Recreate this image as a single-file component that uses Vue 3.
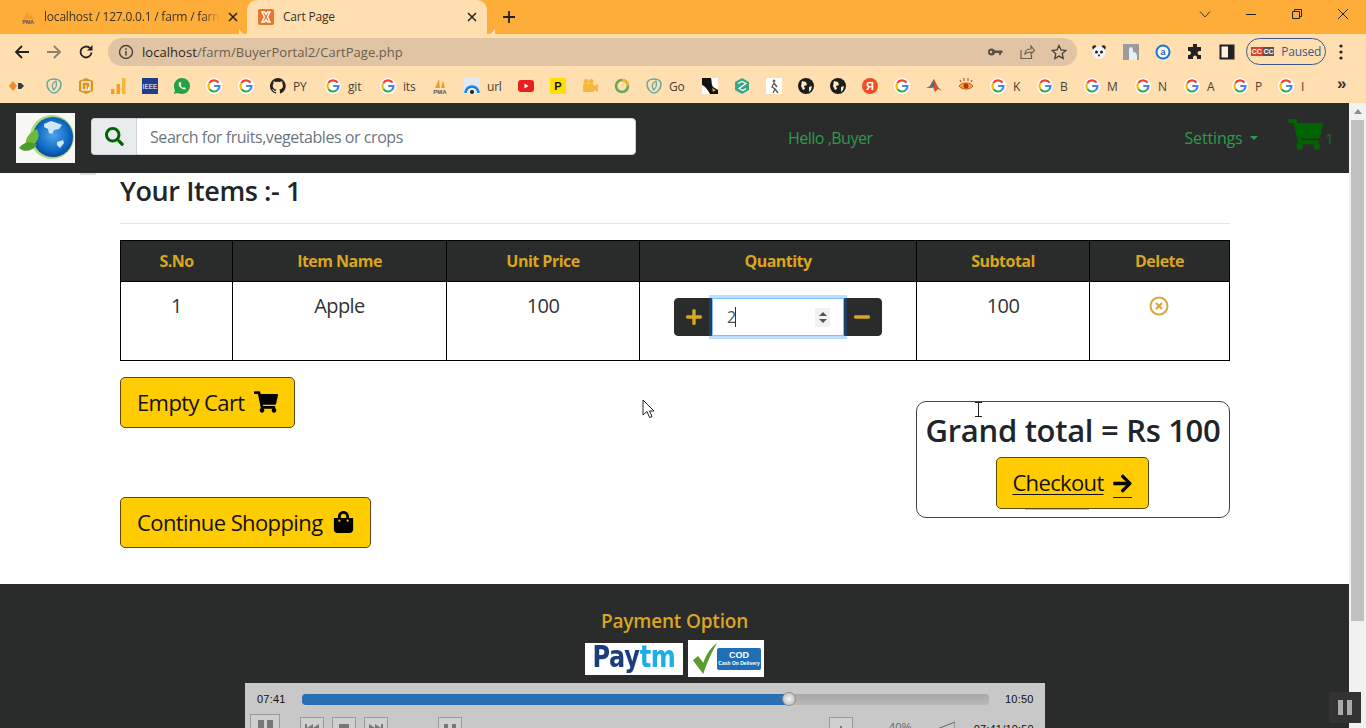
<script setup>
const raw = [
  [17, 'dia'], [54, 'teal'], [86, 'bld'], [118, 'bars'], [150, 'ieee'], [182, 'wa'], [214, 'g'], [246, 'g'],
  [278, 'gh', 'PY'], [333, 'g', 'git'], [388, 'g', 'its'], [440, 'pma'], [472, 'arc', 'url'], [526, 'yt'],
  [558, 'p'], [590, 'cam'], [622, 'ring'], [654, 'teal', 'Go'], [710, 'peng'], [742, 'hex'], [774, 'fig'],
  [806, 'globe'], [838, 'globe'], [870, 'ya'], [902, 'g'], [934, 'mat'], [966, 'eye'], [998, 'g', 'K'],
  [1045, 'g', 'B'], [1092, 'g', 'M'], [1143, 'g', 'N'], [1192, 'g', 'A'], [1240, 'g', 'P'], [1286, 'g', 'I']
]
const bookmarks = raw.map((b, i) => ({
  kind: b[1],
  label: b[2] || '',
  width: (i < raw.length - 1 ? raw[i + 1][0] - b[0] - 16 : 40)
}))
const columns = ['S.No', 'Item Name', 'Unit Price', 'Quantity', 'Subtotal', 'Delete']
const colWidths = [112, 214, 193, 277, 173, 140]
const cart = 'M528.12 301.319l47.273-208C578.806 78.301 567.391 64 551.99 64H159.208l-9.166-44.81C147.758 8.021 137.93 0 126.529 0H24C10.745 0 0 10.745 0 24v16c0 13.255 10.745 24 24 24h69.883l70.248 343.435C147.325 417.1 136 435.222 136 456c0 30.928 25.072 56 56 56s56-25.072 56-56c0-15.674-6.447-29.835-16.824-40h209.647C430.447 426.165 424 440.326 424 456c0 30.928 25.072 56 56 56s56-25.072 56-56c0-22.172-12.888-41.332-31.579-50.405l5.517-24.276c3.413-15.018-8.002-29.319-23.403-29.319H218.117l-6.545-32h293.145c11.206 0 20.92-7.754 23.403-18.681z'
</script>

<template>
  <div class="screen">
    <header class="tabstrip">
      <div class="tab">
        <svg class="fav" viewBox="0 0 16 16"><path d="M3 10 8 2l1 8zM9 10l2-6 2 6z" fill="#f09a2c"/><text x="8" y="15" font-size="5.5" font-weight="700" text-anchor="middle" fill="#555" font-family="Liberation Sans, sans-serif">PMA</text></svg>
        <span class="tab-title">localhost / 127.0.0.1 / farm / farm</span>
        <svg class="tab-x" viewBox="0 0 10 10"><path d="M1 1l8 8M9 1l-8 8" stroke="#222" stroke-width="1.5"/></svg>
      </div>
      <div class="tab active">
        <svg class="fav" viewBox="0 0 16 16"><rect width="16" height="16" rx="2" fill="#e8762c"/><path d="M4 3h2.500L8 5.500 9.500 3H12L9.500 8 12 13H9.500L8 10.500 6.500 13H4l2.500-5z" fill="none" stroke="#fff" stroke-width="1.400"/></svg>
        <span class="tab-title">Cart Page</span>
        <svg class="tab-x" viewBox="0 0 10 10"><path d="M1 1l8 8M9 1l-8 8" stroke="#222" stroke-width="1.5"/></svg>
      </div>
      <svg class="newtab" viewBox="0 0 12 12"><path d="M6 0v12M0 6h12" stroke="#222" stroke-width="1.800"/></svg>
      <div class="winctl">
        <svg viewBox="0 0 12 12"><path d="M1 3.500 6 9l5-5.500" fill="none" stroke="#333"/></svg>
        <svg viewBox="0 0 12 12"><path d="M1 6.500h10" stroke="#222"/></svg>
        <svg viewBox="0 0 12 12"><path d="M1.500 3.500h7v7h-7zM3.500 3.500v-2h7v7h-2" fill="none" stroke="#222"/></svg>
        <svg viewBox="0 0 12 12"><path d="M1 1l10 10M11 1 1 11" stroke="#222"/></svg>
      </div>
    </header>

    <div class="toolbar">
      <svg class="ti" viewBox="0 0 16 16"><path d="M15 8H2M8 2 2 8l6 6" fill="none" stroke="#222" stroke-width="1.800"/></svg>
      <svg class="ti" viewBox="0 0 16 16"><path d="M1 8h13M8 2l6 6-6 6" fill="none" stroke="#8d7f6c" stroke-width="1.800"/></svg>
      <svg class="ti" viewBox="0 0 16 16"><path d="M13.500 8.500A5.500 5.500 0 1 1 12 4.200" fill="none" stroke="#222" stroke-width="1.800"/><path d="M14.500 1v5.500H9z" fill="#222"/></svg>
      <div class="omnibox">
        <svg class="ti" viewBox="0 0 16 16"><circle cx="8" cy="8" r="6.500" fill="none" stroke="#4a4238" stroke-width="1.400"/><path d="M8 7v4.500M8 4.200v1.500" stroke="#4a4238" stroke-width="1.500"/></svg>
        <span class="url"><b>localhost</b>/farm/BuyerPortal2/CartPage.php</span>
        <div class="omni-actions">
          <svg class="ti" viewBox="0 0 16 16"><circle cx="4.500" cy="8" r="3.500" fill="#5a5045"/><circle cx="4" cy="8" r="1.200" fill="#e0c4a3"/><path d="M7 6.500h8.500v2.500H14v2h-2V9H7z" fill="#5a5045"/></svg>
          <svg class="ti" viewBox="0 0 16 16"><path d="M2 6v8.500h10.500V11M6 10c0-3.500 3-5 6-5V2l3.500 4.500L12 10V8c-3 0-4.500.5-6 2z" fill="none" stroke="#6b6050" stroke-width="1.200"/></svg>
          <svg class="ti" viewBox="0 0 16 16"><path d="m8 1.500 2 4.500 4.800.5-3.600 3.200 1 4.800L8 12.100l-4.200 2.400 1-4.800L1.200 6.500 6 6z" fill="none" stroke="#4a4238" stroke-width="1.300"/></svg>
        </div>
      </div>
      <div class="exts">
        <svg class="ti" viewBox="0 0 16 16"><circle cx="3.500" cy="3.500" r="2.200" fill="#222"/><circle cx="12.500" cy="3.500" r="2.200" fill="#222"/><circle cx="8" cy="8.500" r="6.500" fill="#f4f4f4"/><circle cx="5.500" cy="8" r="1.500" fill="#222"/><circle cx="10.500" cy="8" r="1.500" fill="#222"/><circle cx="8" cy="11.500" r="1" fill="#222"/></svg>
        <svg class="ti" viewBox="0 0 16 16"><rect width="16" height="16" fill="#9b9b9b"/><path d="M6 16V6c0-4 4-4 4 0v2c3 0 4 2 4 4v4z" fill="#e6edf5"/></svg>
        <svg class="ti" viewBox="0 0 16 16"><circle cx="8" cy="8" r="7.500" fill="#1a73d9"/><circle cx="8" cy="8" r="5.500" fill="#fff"/><text x="8" y="11" font-size="9" font-weight="700" text-anchor="middle" fill="#1a5fb4" font-family="Liberation Sans, sans-serif">a</text></svg>
        <svg class="ti" viewBox="0 0 16 16"><path d="M6 1a2 2 0 0 1 4 0v2h4v4h-1.500a2 2 0 0 0 0 4H14v4H10v-1.500a2 2 0 0 0-4 0V15H1v-4h1a2 2 0 0 0 0-4H1V3h5z" fill="#222"/></svg>
        <svg class="ti" viewBox="0 0 16 16"><rect x="1.500" y="1.500" width="13" height="13" fill="#fff3e0" stroke="#222" stroke-width="2"/><rect x="9" y="1" width="6" height="14" fill="#222"/></svg>
      </div>
      <div class="paused">
        <span class="cc"><i>CC</i><i>CC</i></span>
        <span>Paused</span>
      </div>
      <svg class="dots" viewBox="0 0 4 16"><circle cx="2" cy="2" r="1.600"/><circle cx="2" cy="8" r="1.600"/><circle cx="2" cy="14" r="1.600"/></svg>
    </div>

    <div class="bookmarks">
      <div v-for="(b, i) in bookmarks" :key="i" class="bm" :style="{ width: b.width + 'px' }">
        <svg class="bi" viewBox="0 0 16 16">
          <template v-if="b.kind === 'g'">
            <circle cx="8" cy="8" r="8" fill="#fff"/>
            <path d="M12.500 4.600A5.500 5.500 0 0 0 3.400 5" fill="none" stroke="#ea4335" stroke-width="2.200"/>
            <path d="M3.400 5a5.500 5.500 0 0 0 0 6" fill="none" stroke="#fbbc05" stroke-width="2.200"/>
            <path d="M3.400 11a5.500 5.500 0 0 0 8.400 1" fill="none" stroke="#34a853" stroke-width="2.200"/>
            <path d="M11.800 12c1-1 1.700-2.300 1.700-4H8.200" fill="none" stroke="#4285f4" stroke-width="2.200"/>
          </template>
          <template v-else-if="b.kind === 'dia'">
            <path d="M4 3 8 8l-4 5-4-5z" fill="#f08a30"/><path d="M9 5h3l3 3-3 3H9z" fill="#2f3f4a"/>
          </template>
          <template v-else-if="b.kind === 'teal'">
            <path d="M8 1c4 0 7 2 7 5 0 5-4 9-7 9s-7-4-7-9c0-3 3-5 7-5z" fill="none" stroke="#5fa8a8" stroke-width="1.500"/>
            <path d="M10 3C6 5 5 9 8 12c2-2 3-5 2-9z" fill="none" stroke="#5fa8a8" stroke-width="1.200"/>
          </template>
          <template v-else-if="b.kind === 'bld'">
            <path d="M8 0l7 3v10l-7 3-7-3V3z" fill="#d9951f"/><rect x="4" y="4" width="8" height="8" fill="none" stroke="#fff" stroke-width="1.200"/><path d="M8 7v5M10.500 9v3" stroke="#fff"/>
          </template>
          <template v-else-if="b.kind === 'bars'">
            <rect x="1" y="11" width="3.500" height="5" fill="#f59d2a"/><rect x="6.500" y="6" width="3.500" height="10" fill="#f59d2a"/><rect x="12" y="0" width="3.500" height="16" fill="#f7b733"/>
          </template>
          <template v-else-if="b.kind === 'ieee'">
            <rect width="16" height="16" fill="#1d3f8f"/><text x="8" y="11" font-size="6.500" text-anchor="middle" fill="#fff" font-family="Liberation Sans, sans-serif">IEEE</text>
          </template>
          <template v-else-if="b.kind === 'wa'">
            <path d="M8 0a8 8 0 0 1 0 16 8 8 0 0 1-4-1l-4 1 1-4A8 8 0 0 1 8 0z" fill="#25a244"/><path d="M5 4.500c-1 2 0 4 2 5.500s4 2 5 .5L10 9l-1 1C8 9.500 7 8.500 6.500 7l1-1L6.500 4z" fill="#fff"/>
          </template>
          <template v-else-if="b.kind === 'gh'">
            <path d="M8 0a8 8 0 0 0-2.500 15.600c.4.100.5-.2.500-.4v-1.400c-2.200.5-2.700-1-2.700-1-.4-.9-.9-1.200-.9-1.200-.7-.5.100-.5.100-.5.800.1 1.200.8 1.200.8.700 1.200 1.900.9 2.300.7.100-.5.300-.9.500-1.100-1.800-.2-3.700-.9-3.700-4 0-.9.300-1.600.8-2.100-.1-.2-.4-1 .1-2.100 0 0 .7-.2 2.200.8a7.600 7.600 0 0 1 4 0c1.500-1 2.200-.8 2.200-.8.400 1.100.2 1.900.1 2.100.5.600.8 1.300.8 2.100 0 3.100-1.900 3.700-3.700 3.900.3.300.6.800.6 1.500v2.200c0 .2.100.5.600.4A8 8 0 0 0 8 0z" fill="#222"/>
          </template>
          <template v-else-if="b.kind === 'pma'">
            <path d="M3 10 7 1l1 9zM9 10l2-7 2 7z" fill="#f09a2c"/><text x="8" y="15.500" font-size="6" font-weight="700" text-anchor="middle" fill="#555" font-family="Liberation Sans, sans-serif">PMA</text>
          </template>
          <template v-else-if="b.kind === 'arc'">
            <rect y="0" width="16" height="16" fill="#dfe9f2"/><path d="M1.500 15a6.500 6.500 0 0 1 13 0" fill="none" stroke="#1e7fd6" stroke-width="2.500"/><circle cx="8" cy="14" r="2" fill="#123"/>
          </template>
          <template v-else-if="b.kind === 'yt'">
            <rect y="2" width="16" height="12" rx="3" fill="#e8201c"/><path d="M6.500 5.500v5l4-2.500z" fill="#fff"/>
          </template>
          <template v-else-if="b.kind === 'p'">
            <rect width="16" height="16" fill="#ffdf00"/><text x="8" y="12" font-size="11" font-weight="700" text-anchor="middle" fill="#111" font-family="Liberation Sans, sans-serif">P</text>
          </template>
          <template v-else-if="b.kind === 'cam'">
            <rect x="1" y="6" width="11" height="8" rx="1" fill="#f5b83d"/><circle cx="4" cy="3.500" r="2.500" fill="#f5b83d"/><circle cx="9" cy="3.500" r="2.500" fill="#f5b83d"/><path d="M12 8l4-2v8l-4-2z" fill="#f5b83d"/>
          </template>
          <template v-else-if="b.kind === 'ring'">
            <circle cx="8" cy="8" r="6" fill="none" stroke="#6aa84f" stroke-width="2.600"/><path d="M8 2a6 6 0 0 1 6 6" fill="none" stroke="#f0b429" stroke-width="2.600"/>
          </template>
          <template v-else-if="b.kind === 'peng'">
            <rect width="16" height="16" fill="#fff"/><path d="M0 0h9c1 3 0 6 2 9l5 3v4H8C6 12 3 8 0 7z" fill="#111"/><path d="M10 10l4 2-3 2z" fill="#f29a1f"/>
          </template>
          <template v-else-if="b.kind === 'hex'">
            <path d="M8 0l7 4v8l-7 4-7-4V4z" fill="#3aa686"/><path d="M4 5.500l4-2 4 2-7 5 4 2 3-2" fill="none" stroke="#fff" stroke-width="1.200"/>
          </template>
          <template v-else-if="b.kind === 'fig'">
            <rect width="16" height="16" fill="#fff"/><circle cx="8" cy="3" r="1.500" fill="#666"/><path d="M8 5 6 9l3 2-2 4M8 5l3 4M9 11l3 4" fill="none" stroke="#555" stroke-width="1.300"/>
          </template>
          <template v-else-if="b.kind === 'globe'">
            <circle cx="8" cy="8" r="8" fill="#1d1d1d"/><path d="M4 3l4 1 1 3-3 1 1 3-2 1-2-4zM11 9l3-1-1 4-2 2z" fill="#ffe9c8"/>
          </template>
          <template v-else-if="b.kind === 'ya'">
            <circle cx="8" cy="8" r="8" fill="#f04e23"/><text x="8" y="12" font-size="11" font-weight="700" text-anchor="middle" fill="#fff" font-family="Liberation Sans, sans-serif">Я</text>
          </template>
          <template v-else-if="b.kind === 'mat'">
            <path d="M0 10l4-2 4-7 4 8 4 4-4-2-3 3-2-5-3 1z" fill="#c9542a"/><path d="M4 8l4-7v8l-3 1z" fill="#3a6ea5"/>
          </template>
          <template v-else-if="b.kind === 'eye'">
            <path d="M1 8c3-4 11-4 14 0-3 4-11 4-14 0z" fill="#f2a93b" stroke="#c9541e"/><circle cx="8" cy="8" r="2.500" fill="#b03a10"/><path d="M3 4 2 2M6 3V0M10 3V0M13 4l1-2" stroke="#c9541e" stroke-width="1.200"/>
          </template>
        </svg>
        <span v-if="b.label" class="bl">{{ b.label }}</span>
      </div>
      <span class="more">»</span>
    </div>

    <div class="viewport">
      <div class="page">
        <nav class="navbar">
          <svg class="logo" viewBox="0 0 59 50">
            <defs>
              <radialGradient id="gl" cx="0.5" cy="0.45" r="0.6"><stop offset="0" stop-color="#4ba6ea"/><stop offset="0.65" stop-color="#1069c4"/><stop offset="1" stop-color="#0a3f8c"/></radialGradient>
            </defs>
            <rect width="59" height="50" fill="#f7f8f6"/>
            <circle cx="36" cy="24" r="22" fill="#a8d97a"/>
            <circle cx="37" cy="24" r="20" fill="url(#gl)"/>
            <path d="M28 11l7-3 6 2 5 2-3 4-5 1-2 4-3-1-1-4-4-2zM41 29l6-2 1 3-4 5-3-3z" fill="#cfe8f7"/>
            <path d="M11 36c-4-8 1-16 10-20 4 8 0 16-10 20z" fill="#6fb93a"/>
            <path d="M3 35c5-6 11-7 18-3-5 6-12 8-18 3z" fill="#4c9a2a"/>
          </svg>
          <div class="search">
            <span class="addon">
              <svg viewBox="0 0 512 512"><path fill="#006400" d="M505 442.700L405.300 343c-4.500-4.500-10.600-7-17-7H372c27.600-35.300 44-79.700 44-128C416 93.100 322.900 0 208 0S0 93.100 0 208s93.100 208 208 208c48.300 0 92.700-16.400 128-44v16.300c0 6.400 2.500 12.500 7 17l99.700 99.700c9.400 9.400 24.600 9.400 33.900 0l28.300-28.300c9.400-9.400 9.400-24.600.1-34zM208 336c-70.700 0-128-57.200-128-128 0-70.700 57.200-128 128-128 70.700 0 128 57.200 128 128 0 70.700-57.200 128-128 128z"/></svg>
            </span>
            <input class="search-input" type="text" placeholder="Search for fruits,vegetables or crops" />
          </div>
          <span class="hello">Hello ,Buyer</span>
          <span class="settings">Settings<i class="caret"></i></span>
          <svg class="nav-cart" viewBox="0 0 576 512"><path fill="#006400" :d="cart"/></svg>
          <span class="count">1</span>
        </nav>

        <main class="content">
          <i class="speck"></i>
          <h3 class="title">Your Items :- 1</h3>
          <hr class="rule" />
          <table class="cart-table">
            <colgroup><col v-for="w in colWidths" :key="w" :style="{ width: w + 'px' }" /></colgroup>
            <thead><tr><th v-for="c in columns" :key="c">{{ c }}</th></tr></thead>
            <tbody>
              <tr>
                <td>1</td>
                <td>Apple</td>
                <td>100</td>
                <td class="qty-cell">
                  <div class="qty">
                    <button class="qbtn left"><svg viewBox="0 0 448 512"><path fill="#daa520" d="M416 208H272V64c0-17.670-14.330-32-32-32h-32c-17.670 0-32 14.330-32 32v144H32c-17.670 0-32 14.330-32 32v32c0 17.670 14.330 32 32 32h144v144c0 17.670 14.330 32 32 32h32c17.670 0 32-14.330 32-32V304h144c17.670 0 32-14.330 32-32v-32c0-17.670-14.330-32-32-32z"/></svg></button>
                    <div class="qinput">
                      <span class="qval">2</span><i class="textcaret"></i>
                      <span class="spin"><i class="up"></i><i class="down"></i></span>
                    </div>
                    <button class="qbtn right"><svg viewBox="0 0 448 512"><path fill="#daa520" d="M416 208H32c-17.670 0-32 14.330-32 32v32c0 17.670 14.330 32 32 32h384c17.670 0 32-14.330 32-32v-32c0-17.670-14.330-32-32-32z"/></svg></button>
                  </div>
                </td>
                <td>100</td>
                <td><svg class="del" viewBox="0 0 20 20"><circle cx="10" cy="10" r="8.500" fill="none" stroke="#dba53c" stroke-width="2"/><path d="M7 7l6 6M13 7l-6 6" stroke="#dba53c" stroke-width="2.200"/></svg></td>
              </tr>
            </tbody>
          </table>

          <div class="lower">
            <div class="actions">
              <button class="yellow">Empty Cart
                <svg class="y-cart" viewBox="0 0 576 512"><path fill="#000" :d="cart"/></svg>
              </button>
              <button class="yellow">Continue Shopping
                <svg class="y-bag" viewBox="0 0 448 512"><path fill="#000" d="M352 160v-32C352 57.420 294.579 0 224 0 153.420 0 96 57.420 96 128v32H0v272c0 44.183 35.817 80 80 80h288c44.183 0 80-35.817 80-80V160h-96zm-192-32c0-35.290 28.710-64 64-64s64 28.710 64 64v32H160v-32zm160 120c-13.255 0-24-10.745-24-24s10.745-24 24-24 24 10.745 24 24-10.745 24-24 24zm-192 0c-13.255 0-24-10.745-24-24s10.745-24 24-24 24 10.745 24 24-10.745 24-24 24z"/></svg>
              </button>
            </div>
            <div class="total">
              <h2 class="grand">Grand total = Rs 100</h2>
              <button class="yellow checkout"><span class="ul">Checkout</span>
                <span class="ul-icon"><svg class="y-arrow" viewBox="0 0 448 512"><path fill="#000" d="M190.500 66.900l22.200-22.200c9.400-9.400 24.600-9.400 33.900 0L441 239c9.400 9.400 9.400 24.600 0 33.900L246.600 467.300c-9.400 9.400-24.600 9.400-33.900 0l-22.200-22.200c-9.500-9.500-9.300-25 .4-34.300L311.400 296H24c-13.300 0-24-10.700-24-24v-32c0-13.300 10.700-24 24-24h287.400L190.900 101.200c-9.800-9.300-10-24.800-.4-34.300z"/></svg></span>
              </button>
            </div>
            <svg class="ibeam" viewBox="0 0 9 15"><path d="M1 .5h7M1 14.500h7M4.500 .5v14" stroke="#222" fill="none"/></svg>
            <svg class="arrow-cursor" viewBox="0 0 13 20"><path d="M1 1v15l4-3.500 2.500 6 2.500-1-2.500-5.500H12z" fill="#fff" stroke="#222"/></svg>
          </div>
        </main>

        <footer class="footer">
          <div class="pay-title">Payment Option</div>
          <div class="pay-logos">
            <div class="paytm"><span class="pt-text"><span class="pt-a">Pay</span><span class="pt-b">tm</span></span></div>
            <div class="cod">
              <svg class="check" viewBox="0 0 30 36"><path d="M1 20l6-5 6 8C17 12 22 5 29 0 23 10 17 23 13 36z" fill="#5b9a2e"/></svg>
              <div class="cod-badge"><strong>COD</strong><small>Cash On Delivery</small></div>
            </div>
          </div>
        </footer>
      </div>
      <div class="scrollbar">
        <i class="sb-up"></i>
        <div class="sb-thumb"></div>
      </div>

      <div class="player">
        <div class="seek">
          <span class="stamp">07:41</span>
          <div class="track"><div class="fill"></div><i class="knob"></i></div>
          <span class="stamp">10:50</span>
        </div>
        <div class="pctl">
          <span class="pb big"><i class="pp"></i><i class="pp"></i></span>
          <span class="pb first"><svg viewBox="0 0 16 8"><path d="M1 0h2v8H1zM9 0v8L3 4zM15 0v8L9 4z" fill="#777"/></svg></span>
          <span class="pb"><i class="st"></i></span>
          <span class="pb"><svg viewBox="0 0 16 8"><path d="M1 0v8l6-4zM7 0v8l6-4zM13 0h2v8h-2z" fill="#777"/></svg></span>
          <span class="pb far"><svg viewBox="0 0 16 8"><path d="M2 0h4v4H2zM10 0h4v4h-4z" fill="#777"/></svg></span>
          <span class="pb tail"><svg viewBox="0 0 16 8"><path d="M2 4h3v4H2zM7 2h2v6H7zM11 4h3v4h-3z" fill="#777"/></svg></span>
          <span class="vol">40%</span>
          <svg class="wedge" viewBox="0 0 28 12"><path d="M0 12 28 1v11z" fill="none" stroke="#666"/></svg>
          <span class="ptime">07:41/10:50</span>
        </div>
      </div>
      <div class="rec-pause"><i></i><i></i></div>
    </div>
  </div>
</template>

<style>
html, body { margin: 0; padding: 0; background: #fff; overflow: hidden; }
</style>

<style scoped>
.screen { width: 1366px; height: 728px; overflow: hidden; display: flex; flex-direction: column; font-family: "Open Sans", "Noto Sans", sans-serif; color: #212529; }
svg { display: block; flex: none; }

.tabstrip { height: 34px; background: #ffad39; display: flex; align-items: center; flex: none; }
.tab { width: 247px; height: 34px; box-sizing: border-box; padding: 0 9px 0 20px; display: flex; align-items: center; gap: 8px; font-size: 12px; letter-spacing: -.2px; color: #3a3226; position: relative; }
.tab.active { width: 240px; background: #ffdfb0; border-radius: 10px 10px 0 0; padding: 0 10px 0 11px; gap: 9px; }
.tab.active::before, .tab.active::after { content: ""; position: absolute; bottom: 0; width: 8px; height: 8px; background: radial-gradient(circle at 0 0, #ffad39 8px, #ffdfb0 8.500px); }
.tab.active::before { left: -8px; transform: scaleX(-1); }
.tab.active::after { right: -8px; }
.fav { width: 16px; height: 16px; }
.tab-title { flex: 1; white-space: nowrap; overflow: hidden; line-height: 18px; }
.tab:first-child .tab-title { -webkit-mask-image: linear-gradient(90deg, #000 90%, transparent); mask-image: linear-gradient(90deg, #000 90%, transparent); }
.tab-x { width: 10px; height: 10px; }
.newtab { width: 12px; height: 12px; margin-left: 16px; }
.winctl { margin-left: auto; display: flex; gap: 34px; padding-right: 17px; align-self: flex-start; padding-top: 8px; }
.winctl svg { width: 12px; height: 12px; }

.toolbar { height: 35px; background: #ffdfb0; display: flex; align-items: center; padding-left: 14px; gap: 16px; flex: none; }
.ti { width: 16px; height: 16px; }
.omnibox { width: 969px; height: 28px; box-sizing: border-box; margin-left: -2px; border-radius: 14px; background: #e0c4a3; display: flex; align-items: center; padding: 0 10px; gap: 8px; }
.url { font-size: 13px; letter-spacing: .05px; color: #6b5f50; white-space: nowrap; }
.url b { font-weight: 400; color: #2c261e; }
.omni-actions { margin-left: auto; display: flex; gap: 16px; }
.exts { display: flex; gap: 16px; margin-left: -2px; }
.paused { width: 80px; height: 27px; box-sizing: border-box; margin-left: -5px; border: 1px solid #3c5a88; border-radius: 14px; display: flex; align-items: center; justify-content: center; gap: 7px; font-size: 12px; letter-spacing: -.2px; color: #3c5a88; }
.cc { display: flex; }
.cc i { font: 700 7px/9px "Liberation Sans", sans-serif; color: #fff; background: #d8452e; padding: 0 1px; }
.cc i + i { background: #555; }
.dots { width: 4px; height: 16px; margin-left: -3px; fill: #222; }

.bookmarks { height: 34px; background: #ffdfb0; display: flex; align-items: center; padding-left: 9px; gap: 16px; flex: none; }
.bm { display: flex; align-items: center; gap: 7px; flex: none; height: 16px; }
.bi { width: 16px; height: 16px; }
.bl { font-size: 12px; letter-spacing: -.2px; color: #4a4033; white-space: nowrap; }
.more { position: absolute; left: 1337px; top: 74px; font: 700 17px/20px "Liberation Sans", sans-serif; color: #333; }

.viewport { flex: 1; min-height: 0; display: flex; position: relative; overflow: hidden; }
.page { width: 1349px; display: flex; flex-direction: column; }
.scrollbar { width: 17px; background: #f1f1f1; position: relative; }
.sb-up { display: block; margin: 6px auto 0; width: 0; height: 0; border: 4px solid transparent; border-top: 0; border-bottom: 5px solid #8c8c8c; }
.sb-thumb { position: absolute; left: 2px; right: 2px; top: 17px; height: 501px; background: #c1c1c1; }

.navbar { height: 70px; background: #2a2c2b; display: flex; align-items: flex-start; flex: none; position: relative; }
.logo { width: 59px; height: 50px; margin: 10px 0 0 16px; }
.search { display: flex; width: 545px; height: 37px; margin: 15px 0 0 16px; }
.addon { width: 45px; box-sizing: border-box; background: #e9ecef; border: 1px solid #ced4da; border-right: 0; border-radius: 4px 0 0 4px; display: flex; align-items: center; justify-content: center; }
.addon svg { width: 19px; height: 19px; }
.search-input { flex: 1; box-sizing: border-box; min-width: 0; border: 1px solid #ced4da; border-radius: 0 4px 4px 0; padding: 0 13px; font: 16px "Open Sans", sans-serif; letter-spacing: -.44px; outline: 0; background: #fff; }
.search-input::placeholder { color: #6c757d; opacity: 1; }
.hello { margin: 24px 0 0 152px; font-size: 16px; line-height: 22px; letter-spacing: -.5px; color: #2f9a4c; white-space: nowrap; }
.settings { margin: 24px 0 0 312px; font-size: 16px; line-height: 22px; letter-spacing: -.15px; color: #2f9a4c; display: flex; align-items: center; white-space: nowrap; }
.caret { width: 0; height: 0; margin-left: 7px; border: 4px solid transparent; border-bottom: 0; border-top: 4.500px solid #2f9a4c; }
.nav-cart { width: 35px; height: 31px; margin: 16px 0 0 30px; }
.count { margin: 26px 0 0 3px; font-size: 14px; line-height: 20px; color: #1a7030; }

.content { flex: none; height: 411px; box-sizing: border-box; padding: 0 119px 0 120px; position: relative; }
.speck { position: absolute; left: 80px; top: 0; width: 16px; height: 2px; background: #ddd; }
.title { margin: 0; font-size: 27px; line-height: 36px; font-weight: 600; letter-spacing: -.42px; color: #212529; }
.rule { margin: 14px 0 16px; border: 0; border-top: 1px solid #e5e5e5; }
.cart-table { width: 1109px; table-layout: fixed; border-collapse: collapse; text-align: center; }
th, td { border: 1px solid #000; }
th { background: #2a2c2b; color: #daa520; font-size: 16px; line-height: 24px; padding: 8px 0; font-weight: 700; letter-spacing: -.52px; }
td { padding: 9px 0 0; vertical-align: top; font-size: 20px; line-height: 30px; color: #333; letter-spacing: -.6px; }
td.qty-cell { padding: 16px 0 24px; }
.qty { display: flex; justify-content: center; }
.qbtn { width: 38px; height: 38px; padding: 0; background: #2a2c2b; border: 1px solid #2a2c2b; display: flex; align-items: center; justify-content: center; }
.qbtn.left { border-radius: 4px 0 0 4px; padding-left: 2px; }
.qbtn.right { border-radius: 0 4px 4px 0; padding-right: 2px; }
.qbtn svg { width: 16px; height: 18px; }
.qinput { width: 132px; height: 38px; box-sizing: border-box; border: 1px solid #80bdff; box-shadow: 0 0 0 3px rgba(0, 123, 255, .25); background: #fff; position: relative; z-index: 1; display: flex; align-items: center; padding-left: 14px; font-size: 16px; color: #495057; }
.qval { line-height: 22px; }
.textcaret { width: 1px; height: 20px; background: #333; margin-left: -1px; }
.spin { position: absolute; right: 13px; top: 9px; width: 15px; height: 19px; background: #f1f1f1; display: flex; flex-direction: column; align-items: center; justify-content: center; gap: 3px; }
.spin i { width: 0; height: 0; border: 4px solid transparent; }
.spin .up { border-top: 0; border-bottom: 4px solid #555; }
.spin .down { border-bottom: 0; border-top: 4px solid #555; }
.del { width: 20px; height: 20px; margin: 5px 0 0 59px; }

.lower { display: flex; justify-content: space-between; align-items: flex-start; margin-top: 16px; position: relative; }
.actions { display: flex; flex-direction: column; align-items: flex-start; gap: 69px; }
.yellow { height: 51px; box-sizing: border-box; padding: 0 16px 2px; background: #ffcc00; border: 1px solid #5c4a0a; border-radius: 5px; font: 22px "Open Sans", sans-serif; letter-spacing: -.6px; color: #111; display: flex; align-items: center; white-space: nowrap; }
.y-cart { width: 24px; height: 22px; margin-left: 9px; }
.y-bag { width: 21px; height: 22px; margin-left: 10px; }
.total { width: 314px; height: 117px; box-sizing: border-box; margin-top: 24px; border: 1px solid #444; border-radius: 10px; display: flex; flex-direction: column; align-items: center; }
.grand { margin: 6px 0 5px; font-size: 31px; line-height: 44px; font-weight: 600; letter-spacing: -.3px; color: #212529; white-space: nowrap; }
.checkout { position: relative; width: 153px; height: 52px; justify-content: center; padding: 0 0 2px; margin-left: -2px; letter-spacing: -.65px; }
.checkout::after { content: ""; position: absolute; left: 28px; width: 64px; bottom: -2px; height: 1px; background: #bbb; }
.ul { text-decoration: underline; text-underline-offset: 3px; text-decoration-thickness: 1px; }
.ul-icon { display: block; margin-left: 9px; padding-bottom: 3px; border-bottom: 1px solid #222; margin-top: 6px; }
.y-arrow { width: 19px; height: 21px; }
.ibeam { position: absolute; left: 854px; top: 25px; width: 9px; height: 15px; }
.arrow-cursor { position: absolute; left: 522px; top: 22px; width: 13px; height: 20px; }

.footer { flex: 1; min-height: 0; background: #2a2c2b; display: flex; flex-direction: column; align-items: center; overflow: hidden; }
.pay-title { margin-top: 23px; font-size: 19px; line-height: 28px; font-weight: 600; letter-spacing: -.18px; color: #daa520; }
.pay-logos { display: flex; align-items: flex-start; gap: 5px; margin-top: 5px; }
.paytm { width: 98px; height: 32px; margin-top: 3px; background: #fff; display: flex; align-items: center; justify-content: center; }
.pt-text { display: block; font: 700 24px/24px "DejaVu Sans", sans-serif; letter-spacing: -.3px; transform: scaleY(1.25); margin-top: -5px; }
.pt-a { color: #1c3c7c; }
.pt-b { color: #19aee8; }
.cod { width: 76px; height: 37px; background: #fff; display: flex; align-items: center; position: relative; }
.check { width: 26px; height: 33px; margin-left: 4px; }
.cod-badge { width: 44px; height: 22px; margin-left: -1px; background: #1f6fb5; color: #fff; display: flex; flex-direction: column; align-items: center; justify-content: center; font-family: "Liberation Sans", sans-serif; border-radius: 2px; }
.cod-badge strong { font-size: 9px; line-height: 10px; font-weight: 700; }
.cod-badge small { font-size: 5px; line-height: 7px; font-weight: 700; white-space: nowrap; }

.player { position: absolute; left: 245px; top: 580px; width: 800px; height: 60px; background: #c8c8c8; font: 11px "Liberation Sans", Tahoma, sans-serif; letter-spacing: .2px; color: #111; }
.seek { display: flex; align-items: center; gap: 16px; padding: 10px 11px 0 12px; height: 12px; }
.stamp { width: 29px; white-space: nowrap; }
.track { flex: 1; height: 11px; background: linear-gradient(#a8a8a8, #b8b8b8); border-radius: 4px; position: relative; }
.fill { width: 487px; height: 100%; background: #2a6eb4; border-radius: 4px 0 0 4px; }
.knob { position: absolute; left: 480px; top: -2px; width: 14px; height: 14px; border-radius: 50%; background: radial-gradient(#f2f2f2, #b5b5b5); border: 1px solid #8d8d8d; box-sizing: border-box; }
.pctl { display: flex; align-items: flex-start; padding: 9px 0 0 5px; }
.pb { width: 24px; height: 24px; box-sizing: border-box; margin-top: 3px; margin-right: 8px; border: 1px solid #9a9a9a; background: #cfcfcf; display: flex; justify-content: center; gap: 3px; padding-top: 6px; }
.pb.big { width: 30px; height: 30px; margin-top: 0; margin-right: 20px; padding-top: 5px; }
.pb svg { width: 16px; height: 8px; }
.pp { width: 6px; height: 14px; background: #777; }
.st { width: 10px; height: 8px; background: #777; }
.pb.far { margin-left: 42px; margin-right: 0; }
.pb.tail { margin-left: 367px; margin-right: 0; }
.vol { margin: 7px 0 0 36px; color: #666; }
.wedge { width: 28px; height: 12px; margin: 7px 0 0 15px; }
.ptime { margin: 9px 0 0 19px; }
.rec-pause { position: absolute; left: 1329px; top: 589px; width: 32px; height: 31px; background: #333; display: flex; align-items: center; justify-content: center; gap: 4px; }
.rec-pause i { width: 5px; height: 15px; background: #aaa; }
</style>
